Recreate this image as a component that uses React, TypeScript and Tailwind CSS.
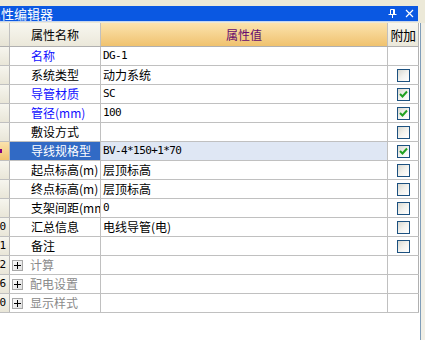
import React from "react";

type Row = {
  n: number;
  name: string;
  value?: string;
  mono?: boolean;
  blue?: boolean;
  selected?: boolean;
  group?: boolean;
  cb?: boolean | null;
};

const rows: Row[] = [
  { n: 1, name: "名称", blue: true, value: "DG-1", mono: true, cb: null },
  { n: 2, name: "系统类型", value: "动力系统", cb: false },
  { n: 3, name: "导管材质", blue: true, value: "SC", mono: true, cb: true },
  { n: 4, name: "管径(mm)", blue: true, value: "100", mono: true, cb: true },
  { n: 5, name: "敷设方式", value: "", cb: false },
  { n: 6, name: "导线规格型", selected: true, value: "BV-4*150+1*70", mono: true, cb: true },
  { n: 7, name: "起点标高(m)", value: "层顶标高", cb: false },
  { n: 8, name: "终点标高(m)", value: "层顶标高", cb: false },
  { n: 9, name: "支架间距(mm)", value: "0", mono: true, cb: false },
  { n: 10, name: "汇总信息", value: "电线导管(电)", cb: false },
  { n: 11, name: "备注", value: "", cb: false },
  { n: 12, name: "计算", group: true, cb: null },
  { n: 16, name: "配电设置", group: true, cb: null },
  { n: 20, name: "显示样式", group: true, cb: null },
];

const cjk = "font-['SimSun','Noto_Sans_CJK_SC',sans-serif]";
const mono = "font-['DejaVu_Sans_Mono','Noto_Sans_CJK_SC',monospace]";

function CheckBox({ checked }: { checked: boolean }) {
  return (
    <div className="w-[13px] h-[13px] border border-[#1c5180] bg-gradient-to-br from-[#d8d8d0] via-[#f2f2ee] to-white flex items-center justify-center">
      {checked && (
        <svg width="9" height="9" viewBox="0 0 9 9">
          <path d="M1 4 L3.5 6.5 L8 1.5" stroke="#21a121" strokeWidth="2" fill="none" />
        </svg>
      )}
    </div>
  );
}

export default function App() {
  return (
    <div className={`w-[425px] h-[340px] bg-[#ece9d8] overflow-hidden flex flex-col ${cjk}`}>
      <div className="h-[6px] shrink-0" />
      {/* title bar */}
      <div className="flex shrink-0">
        <div className="w-[418px] h-[15px] bg-[#0a58e2] overflow-hidden flex items-center relative">
          <span className="ml-[-12px] text-white text-[13px] leading-[15px] whitespace-nowrap">属性编辑器</span>
          <div className="absolute right-[21px] top-[3px]">
            <svg width="9" height="9" viewBox="0 0 9 9">
              <path d="M2.5 0.5 H6.5 V5 M5.5 0.5 V5" stroke="white" strokeWidth="1" fill="none" />
              <path d="M2.5 0.5 V5" stroke="white" strokeWidth="1" />
              <path d="M0.5 5.5 H8.5" stroke="white" strokeWidth="1" />
              <path d="M4.5 5.5 V9" stroke="white" strokeWidth="1" />
            </svg>
          </div>
          <div className="absolute right-[4px] top-[3px]">
            <svg width="9" height="9" viewBox="0 0 9 9">
              <path d="M1 1 L8 8 M8 1 L1 8" stroke="white" strokeWidth="1.2" />
            </svg>
          </div>
        </div>
      </div>
      <div className="h-[1px] w-[418px] bg-[#c6d6ee] shrink-0" />
      <div className="h-[1px] w-[418px] bg-[#ece9d8] shrink-0" />
      {/* body */}
      <div className="flex flex-1">
        <div className="w-[419px] bg-white flex flex-col">
          {/* header */}
          <div className="grid grid-cols-[10px_91px_287px_31px] h-[24px] border-b border-[#b0b0b0]">
            <div className="bg-gradient-to-b from-[#f6f5ee] to-[#e6e3d4] border-r border-[#c0c0c0]" />
            <div className="bg-gradient-to-b from-[#f8f7f0] to-[#ebe8da] border-r border-[#c0c0c0] pl-[21px] text-[12px] leading-[23px] text-black">
              属性名称
            </div>
            <div className="bg-gradient-to-b from-[#fbe3ad] to-[#f0c26e] border-r border-[#c0c0c0] text-center text-[12px] leading-[23px] text-[#660a6e]">
              属性值
            </div>
            <div className="bg-gradient-to-b from-[#f8f7f0] to-[#ebe8da] border-r border-[#b0b0b0] text-center text-[13px] leading-[23px] text-black tracking-[-0.5px]">
              附加
            </div>
          </div>
          {rows.map((r) => (
            <div key={r.n} className="grid grid-cols-[10px_91px_287px_31px] h-[19px] border-b border-[#c0c0c0]">
              <div
                className={`overflow-hidden border-r border-[#b8b8b8] ${
                  r.selected ? "bg-gradient-to-b from-[#fbe3ad] to-[#f0c26e]" : "bg-gradient-to-b from-[#f6f5ee] to-[#e9e6d8]"
                } text-[11px] leading-[18px] text-black ${mono}`}
              >
                {r.selected ? (
                  <div className="w-[2px] h-[4px] bg-[#800080] mt-[7px]" />
                ) : (
                  <span className="ml-[-7px] whitespace-nowrap">{r.n}</span>
                )}
              </div>
              <div
                className={`border-r border-[#c0c0c0] overflow-hidden whitespace-nowrap text-[12px] leading-[18px] flex items-center ${
                  r.selected ? "bg-[#316ac5] text-white" : r.group ? "text-[#8a8a8a]" : r.blue ? "text-[#1010ff]" : "text-black"
                } ${r.group ? "pl-[2px]" : "pl-[21px]"}`}
              >
                {r.group && (
                  <div className="w-[11px] h-[11px] border border-[#a8a8a8] bg-gradient-to-br from-[#fafafa] to-[#e0e0e0] flex items-center justify-center mr-[7px] shrink-0">
                    <svg width="7" height="7" viewBox="0 0 7 7">
                      <path d="M0 3.5 H7 M3.5 0 V7" stroke="black" strokeWidth="1" />
                    </svg>
                  </div>
                )}
                {r.name}
              </div>
              <div
                className={`border-r border-[#c0c0c0] overflow-hidden whitespace-nowrap pl-[2px] text-black ${
                  r.selected ? "bg-[#dfe7f4]" : ""
                } ${r.mono ? `${mono} text-[11px] tracking-[-0.6px] leading-[18px]` : "text-[12px] leading-[18px]"}`}
              >
                {r.value}
              </div>
              <div className="border-r border-[#b0b0b0] flex items-center justify-center">
                {r.cb !== null && r.cb !== undefined && <CheckBox checked={r.cb} />}
              </div>
            </div>
          ))}
          <div className="flex-1 bg-white" />
        </div>
        <div className="w-[1px] bg-white" />
        <div className="w-[1px] bg-[#7f9db9]" />
        <div className="flex-1 bg-[#f1efe6]" />
      </div>
    </div>
  );
}
